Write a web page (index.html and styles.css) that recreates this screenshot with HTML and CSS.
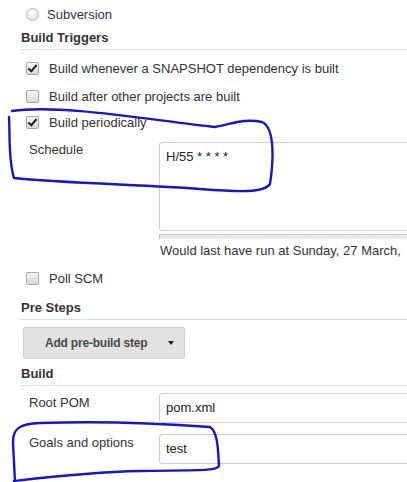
FILE: index.html
```html
<!DOCTYPE html>
<html lang="en">
<head>
    <meta charset="UTF-8">
    <title>Job configuration</title>
    <link rel="stylesheet" href="styles.css">
</head>
<body>
    <div class="config">
        <div class="option-row radio-row">
            <span class="radio"></span>
            <span>Subversion</span>
        </div>

        <div class="section-title title-triggers">Build Triggers</div>

        <div class="option-row row-snapshot">
            <span class="box checked"></span>
            <span>Build whenever a SNAPSHOT dependency is built</span>
        </div>
        <div class="option-row row-after">
            <span class="box"></span>
            <span>Build after other projects are built</span>
        </div>
        <div class="option-row row-periodic">
            <span class="box checked"></span>
            <span>Build periodically</span>
        </div>

        <div class="field-row schedule-row">
            <div class="field-label">Schedule</div>
            <div class="field-value">
                <div class="textarea">H/55 * * * *</div>
                <div class="resize-bar"></div>
                <div class="hint">Would last have run at Sunday, 27 March,</div>
            </div>
        </div>

        <div class="option-row row-poll">
            <span class="box"></span>
            <span>Poll SCM</span>
        </div>

        <div class="section-title title-pre">Pre Steps</div>

        <div class="button-row">
            <button class="step-button">Add pre-build step <span class="caret"></span></button>
        </div>

        <div class="section-title title-build">Build</div>

        <div class="field-row pom-row">
            <div class="field-label">Root POM</div>
            <div class="field-value">
                <div class="text-input">pom.xml</div>
            </div>
        </div>
        <div class="field-row goals-row">
            <div class="field-label">Goals and options</div>
            <div class="field-value">
                <div class="text-input">test</div>
            </div>
        </div>
    </div>

    <!-- hand-drawn marks over the screenshot -->
    <svg class="marks" width="407" height="482" viewBox="0 0 407 482">
        <path d="M 12 111 C 60 104, 150 120, 215 127 C 232 124, 244 118, 262 122 C 276 128, 273 165, 270 184 C 264 193, 240 192, 200 189 C 150 185, 60 183, 14 178 C 8 160, 10 128, 9 117"/>
        <path d="M 15 482 L 13 442 C 13 428, 20 424, 40 423 C 100 421, 170 424, 210 427 C 218 432, 218 450, 219 466 C 217 471, 200 470, 140 471 C 90 472, 40 478, 14 481"/>
    </svg>
</body>
</html>
```

FILE: styles.css
```css
body {
    margin: 0;
    font-family: "Liberation Sans", Arial, sans-serif;
    font-size: 13px;
    color: #333;
    background-color: #fff;
    overflow: hidden;
    width: 407px;
    height: 482px;
    position: relative;
}
.config {
    padding: 4px 0 0 20px;
    width: 600px;
}
.option-row {
    display: flex;
    align-items: center;
    height: 24px;
    padding-left: 6px;
}
.option-row .box {
    margin-right: 10px;
}
.radio-row {
    height: 20px;
}
.radio {
    width: 11px;
    height: 11px;
    border: 1px solid #b8b8b8;
    border-radius: 50%;
    background: radial-gradient(circle at 40% 35%, #fff 0, #e6e6e6 60%, #cfcfcf 100%);
    margin-right: 8px;
}
.box {
    position: relative;
    width: 11px;
    height: 11px;
    border: 1px solid #a9a9a9;
    border-radius: 2px;
    background: linear-gradient(#f4f4f4, #d9d9d9);
}
.box.checked::after {
    content: "";
    position: absolute;
    left: 3px;
    top: 0;
    width: 3px;
    height: 7px;
    border: solid #222;
    border-width: 0 2px 2px 0;
    transform: rotate(40deg);
}
.section-title {
    font-weight: bold;
    height: 23px;
    line-height: 23px;
    padding-left: 1px;
    border-bottom: 1px solid #ddd;
}
.title-triggers {
    margin-top: 2px;
}
.row-snapshot {
    margin-top: 6px;
}
.row-after {
    margin-top: 4px;
}
.row-periodic {
    margin-top: 2px;
}
.field-row {
    display: flex;
}
.field-label {
    flex: 0 0 139px;
    box-sizing: border-box;
    padding-left: 9px;
    line-height: 16px;
}
.field-value {
    flex: 1;
    min-width: 0;
}
.schedule-row {
    margin-top: 8px;
}
.textarea {
    height: 75px;
    padding: 6px 6px;
    border: 1px solid #ccc;
    border-radius: 3px 0 0 3px;
    line-height: 16px;
    color: #222;
}
.resize-bar {
    margin-top: 3px;
    height: 4px;
    background-color: #e8e8e8;
    border-top: 1px solid #d4d4d4;
    border-left: 1px solid #bbb;
}
.hint {
    margin-top: 4px;
    padding-left: 1px;
    white-space: nowrap;
    line-height: 16px;
}
.row-poll {
    margin-top: 7px;
}
.title-pre {
    margin-top: 6px;
}
.button-row {
    padding: 7px 0 0 3px;
}
.step-button {
    width: 162px;
    height: 32px;
    font-family: inherit;
    font-size: 12px;
    font-weight: bold;
    letter-spacing: -0.2px;
    color: #4a4a4a;
    background-color: #e2e2e2;
    border: 1px solid #cfcfcf;
    border-radius: 2px;
    text-align: left;
    white-space: nowrap;
    padding: 0 0 0 21px;
}
.caret {
    display: inline-block;
    margin-left: 17px;
    border-left: 3.5px solid transparent;
    border-right: 3.5px solid transparent;
    border-top: 4px solid #222;
    vertical-align: 2px;
}
.title-build {
    margin-top: 3px;
}
.pom-row {
    margin-top: 7px;
}
.pom-row .field-label {
    padding-top: 2px;
}
.goals-row {
    margin-top: 11px;
}
.goals-row .field-label {
    padding-top: 1px;
}
.text-input {
    height: 28px;
    line-height: 28px;
    padding-left: 6px;
    border: 1px solid #ccc;
    border-radius: 3px 0 0 3px;
    color: #222;
}
.marks {
    position: absolute;
    left: 0;
    top: 0;
    pointer-events: none;
}
.marks path {
    fill: none;
    stroke: #1616c8;
    stroke-width: 2.4;
    stroke-linecap: round;
    stroke-linejoin: round;
}
```
